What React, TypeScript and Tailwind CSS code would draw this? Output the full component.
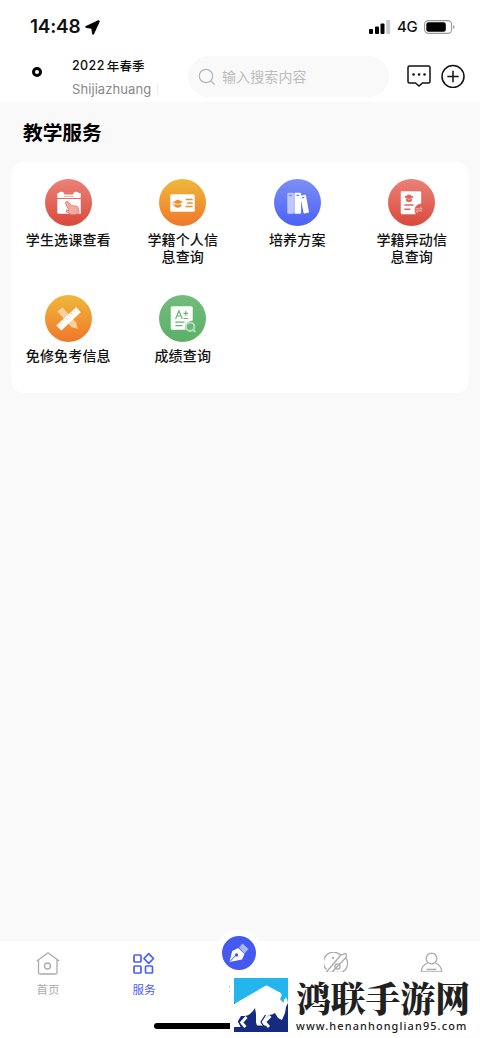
import type { ReactNode } from "react"

const services = [
    { title: ["学生选课查看"], color: "from-[#ea8178] to-[#d9483a]", icon: <CalendarIcon /> },
    { title: ["学籍个人信", "息查询"], color: "from-[#eeb83a] to-[#ee762b]", icon: <CardIcon /> },
    { title: ["培养方案"], color: "from-[#7d8ef5] to-[#4c60f5]", icon: <BooksIcon /> },
    { title: ["学籍异动信", "息查询"], color: "from-[#ea8178] to-[#d9483a]", icon: <RecordIcon /> },
    { title: ["免修免考信息"], color: "from-[#eeb83a] to-[#ee762b]", icon: <RulerIcon /> },
    { title: ["成绩查询"], color: "from-[#72bc7c] to-[#5bb066]", icon: <ScoreIcon /> },
]

function CalendarIcon() {
    return (
        <svg viewBox="0 0 46 46" className="size-full">
            <path d="M12 14h23v4.500H12zM12 19.500h23V34H13.500q-1.500 0-1.500-1.500z" fill="#fff" />
            <path d="M15 15h17" stroke="#e4786e" strokeWidth="4.500" />
            <path d="M16 16h15" stroke="#fff" strokeWidth="1.500" />
            <circle cx="16" cy="15.500" r="2.900" fill="#fff" />
            <circle cx="30.500" cy="15.500" r="2.900" fill="#fff" />
            <path d="M20.500 22.500q1.500-1.500 3 .5l2.500 3.300q1-.8 2 0 1-.6 2 .3 1.500-.5 2.300 1.200l1.200 5-4 2.200h-4l-5-3.500q-.5-1.800 3-.8l-3.200-6q-.5-1.300.2-2.200z" fill="#f1aaa2" stroke="#e06659" strokeWidth=".7" />
        </svg>
    )
}

function CardIcon() {
    return (
        <svg viewBox="0 0 46 46" className="size-full">
            <rect x="11" y="15" width="24" height="17" rx="1.500" fill="#fff" />
            <path d="M13.500 22.500l5-2.500 5 2.500-5 2.300z" fill="#ec9030" />
            <path d="M15.500 24.500v2.300q3 2 6 0v-2.300l-3 1.300zM14 23v4" fill="#ec9030" stroke="#ec9030" strokeWidth=".6" />
            <path d="M26 20h7M27.500 23.500h5.500M26 27h7" stroke="#ec9030" strokeWidth="1.400" />
        </svg>
    )
}

function BooksIcon() {
    return (
        <svg viewBox="0 0 46 46" className="size-full">
            <rect x="13" y="13.500" width="6.500" height="20.500" rx="1" fill="#bfc7fc" />
            <rect x="20" y="13.500" width="6.500" height="20.500" rx="1" fill="#fff" />
            <path d="M25.500 16.500l4.800-1q.8-.1 1 .7l3 16.500-4.400 1.100q-.8.200-1-.7z" fill="#fff" />
            <path d="M14.800 16h2.600M22 16h2.600M27.500 18.500l2-.5" stroke="#7082f5" strokeWidth="1.300" />
        </svg>
    )
}

function RecordIcon() {
    return (
        <svg viewBox="0 0 46 46" className="size-full">
            <path d="M13.500 12h17.500q1.500 0 1.500 1.500v10.500q-6 1-6.500 6 0 2.500 1.200 4.500H13.500Q12.500 34.500 12.500 33.500V13q0-1 1-1z" fill="#fff" />
            <path d="M16.500 17.500l4-2 4 2-4 2zM18 19.500v2q2.500 1.500 5 0v-2l-2.500 1.200z" fill="#df665b" stroke="#df665b" strokeWidth=".9" />
            <path d="M16 25.500h9M16 29.500h6" stroke="#df665b" strokeWidth="1.500" />
            <path d="M27 29.200h6.500l-2-1.700M33.500 31.200H27l2 1.700" fill="none" stroke="#f5bbb4" strokeWidth=".9" />
        </svg>
    )
}

function RulerIcon() {
    return (
        <svg viewBox="0 0 46 46" className="size-full">
            <path d="M12 16l5-4 13.500 15 1.500 6-6-1.500z" fill="#f8cf9e" />
            <path d="M11 29.800L30.500 12l4.500 4.800L16 34.800z" fill="#fff" />
            <path d="M13 29l1 1M15.500 26.800l1.500 1.700M18 24.500l1 1M20.500 22.200l1.500 1.700M23 19.900l1 1M25.500 17.600l1.500 1.700M28 15.300l1 1" stroke="#efa057" strokeWidth=".7" />
        </svg>
    )
}

function ScoreIcon() {
    return (
        <svg viewBox="0 0 46 46" className="size-full">
            <path d="M13 11h18.500q1.500 0 1.500 1.500v12.500q-7.500.5-7 9H13q-1.500 0-1.500-1.500v-20q0-1.500 1.500-1.500z" fill="#fff" />
            <path d="M16.200 23.500l3.300-8 3.300 8M17.500 20.500h4M24 18h4.500M26.200 15.700v4.600M24 23h4.500M16 26.500h9M16 30h7" fill="none" stroke="#65b56f" strokeWidth="1.100" />
            <circle cx="30.500" cy="31" r="4.100" fill="#69b873" stroke="#b8dfbd" strokeWidth="2" />
            <path d="M33 34l2.800 2.200" stroke="#b8dfbd" strokeWidth="2" />
        </svg>
    )
}

const StatusBar = () => (
    <div className="flex h-[54px] items-center justify-between pl-[30px] pr-[25px]">
        <div className="flex items-center gap-[5px] font-['Inter'] text-[19px] font-semibold tracking-[-0.25px]">
            <span>14:48</span>
            <svg viewBox="0 0 16 16" className="size-[15px]">
                <path d="M14.200.7L.9 7q-.8.500.2.900l6.100 1 .9 6q.4 1.100 1 .1L15.300 1.500q.1-1-1.100-.8z" stroke="#000" strokeWidth="1" strokeLinejoin="round" />
            </svg>
        </div>
        <div className="flex items-center">
            <svg viewBox="0 0 22 14" className="h-[14px] w-[22px]">
                <rect x="0" y="9" width="4" height="5" rx="1" />
                <rect x="6" y="6.500" width="4" height="7.500" rx="1" />
                <rect x="11.500" y="3.500" width="4" height="10.500" rx="1" />
                <rect x="17.200" y="0" width="4" height="14" rx="1" fill="#ccc" />
            </svg>
            <span className="ml-[6px] w-[22px] font-['Inter'] text-[15px] font-medium tracking-[-0.3px]">4G</span>
            <svg viewBox="0 0 31 14" className="ml-[5px] h-[14px] w-[31px]">
                <rect x=".6" y=".6" width="27" height="12.800" rx="3.800" fill="none" stroke="#999" strokeWidth="1.100" />
                <rect x="2.300" y="2.200" width="19.500" height="9.600" rx="2.300" />
                <path d="M29.200 5q1.400.5 1.400 2t-1.400 2z" fill="#999" />
            </svg>
        </div>
    </div>
)

const Header = () => (
    <div className="flex h-[48px] items-start">
        <div className="ml-[32px] mt-[13px] size-[10px] rounded-full border-[3px] border-black"></div>
        <div className="ml-[30px] w-[116px]">
            <div className="mt-[2px] flex gap-[2px] text-[12.500px] font-medium leading-[19px] tracking-[0.1px]">
                <span className="font-['Inter'] tracking-[0.4px]">2022</span>
                <span>年春季</span>
            </div>
            <div className="mt-[5px] flex items-center font-['Inter'] text-[13px] leading-[18px] tracking-[0.080px] text-[#888]">
                Shijiazhuang
                <span className="ml-[6px] h-[10px] w-px bg-[#eee]"></span>
            </div>
        </div>
        <div className="mt-[2px] flex h-[41px] w-[201px] items-center rounded-full bg-[#f9f9f9] pl-[10px]">
            <svg viewBox="0 0 18 18" className="size-[18px]" fill="none" stroke="#b5b5b5" strokeWidth="1.200">
                <circle cx="8" cy="8" r="6.700" />
                <path d="M12.800 12.800l3.700 3.700" />
            </svg>
            <span className="ml-[6px] text-[14px] tracking-[0.1px] text-[#bcbcbc]">输入搜索内容</span>
        </div>
        <svg viewBox="0 0 24 24" className="ml-[18px] mt-[10px] size-[24px]" fill="none" stroke="#111" strokeWidth="1.500">
            <path d="M2.500 2h19q1.500 0 1.500 1.500v14q0 1.500-1.500 1.500h-6L12 22l-3.500-3h-6Q1 19 1 17.500v-14Q1 2 2.500 2z" />
            <path d="M6.500 10.500h.1M12 10.500h.1M17.500 10.500h.1" strokeWidth="2.600" strokeLinecap="round" />
        </svg>
        <svg viewBox="0 0 24 24" className="ml-[10px] mt-[10px] size-[24px]" fill="none" stroke="#111" strokeWidth="1.500">
            <circle cx="12" cy="12.500" r="11" />
            <path d="M12 6.800v11.400M6.300 12.500h11.400" />
        </svg>
    </div>
)

const NavItem = ({ title, active, children }: { title?: string; active?: boolean; children?: ReactNode }) => (
    <div className={active ? "flex flex-col items-center text-[#4b5df2]" : "flex flex-col items-center text-[#ababab]"}>
        <svg viewBox="0 0 24 24" className="mt-[11px] size-[24px]" fill="none" stroke="currentColor" strokeWidth="1.300">
            {children}
        </svg>
        {title && <span className="mt-[5px] text-[11.5px] leading-[16px]">{title}</span>}
    </div>
)

const Watermark = () => (
    <div className="absolute bottom-0 left-[230px] flex h-[66px] w-[250px] bg-white">
        <svg viewBox="0 0 54 54" className="ml-[4px] mt-[6px] h-[54px] w-[54px] shrink-0">
            <rect width="54" height="27" fill="#23b5eb" />
            <rect y="25" width="54" height="29" fill="#152b80" />
            <path d="M0 26L7 22 31 8q1.500-.8 3 0l10 5.500q6 2 9 7.500l1 4-2 4-1 6-3 7-4-2-3-5q-3 2-6 2l-4 5 3.500 5.500H23l-1-3V36l-1-6q-4 7-10 8h-4l-3 5 3 6H0z" fill="#fff" />
            <path d="M47.500 10q-2.500 4 .5 7l-2 4 3.500 4 .5-3.500q3-1.500 1-5-3-2-3.500-6.500z" fill="#23b5eb" />
            <path d="M12.500 39l-5 5.500 4 4.500M36.500 38l-6 6 4.500 5" fill="none" stroke="#fff" strokeWidth="2.800" />
            <path d="M8 38.500L4.800 44l3.200 6M31.500 37l-4.500 7 4 6" fill="none" stroke="#152b80" strokeWidth="1.300" />
        </svg>
        <div className="ml-[8px] whitespace-nowrap text-[#202020]">
            <div className="mt-[7px] h-[37px] font-['Noto_Serif_CJK_SC','Noto_Sans_CJK_SC',serif] text-[34.800px] font-black leading-[37px]">鸿联手游网</div>
            <div className="mt-[3px] font-['Noto_Sans'] text-[10.900px] font-medium leading-[14px] tracking-[1.120px]">www.henanhonglian95.com</div>
        </div>
    </div>
)

const App = () => {
    return (
        <div className="relative flex h-[1038px] w-[480px] flex-col overflow-hidden bg-white font-['Noto_Sans_CJK_SC',sans-serif] text-[#111]">
            <StatusBar />
            <Header />
            <div className="h-[839px] bg-[#f9f9f9] px-[11px]">
                <h1 className="ml-[12px] h-[60px] pt-[15px] text-[19.700px] font-bold leading-[30px] text-black">教学服务</h1>
                <div className="grid h-[231px] grid-cols-4 content-start rounded-[13px] bg-white pt-[17px]">
                    {services.map((item) => (
                        <div key={item.title[0]} className="flex h-[116px] flex-col items-center">
                            <div className={`size-[47px] shrink-0 rounded-full bg-linear-to-b ${item.color}`}>{item.icon}</div>
                            <div className="mt-[5px] whitespace-nowrap text-center text-[14px] font-medium leading-[16.500px] tracking-[0.15px]">
                                {item.title.map((line) => (
                                    <div key={line}>{line}</div>
                                ))}
                            </div>
                        </div>
                    ))}
                </div>
            </div>
            <div className="relative grid h-[97px] grid-cols-5 bg-white">
                <NavItem title="首页">
                    <path d="M.8 9L12 .8 23.200 9M2.500 7.500V20.500q0 1.500 1.500 1.500h15.500Q21 22 21 20.500V7.500" />
                    <circle cx="11.500" cy="14" r="3" />
                </NavItem>
                <NavItem title="服务" active>
                    <g strokeWidth="1.700">
                        <rect x="2" y="3" width="7" height="7" rx="1" />
                        <rect x="2" y="14" width="7" height="7" rx="1" />
                        <rect x="13.500" y="14" width="7" height="7" rx="1" />
                        <path d="M16.700 1.700L21.500 6.500 16.700 11.300 11.900 6.500z" strokeLinejoin="round" />
                    </g>
                </NavItem>
                <div className="relative flex justify-center">
                    <div className="absolute -top-[11px] right-[25px] flex h-[46px] w-[48px] justify-center rounded-full bg-white pt-[6px]">
                        <svg viewBox="0 0 34 34" className="size-[34px]">
                            <circle cx="17" cy="17" r="17" fill="#4359ef" />
                            <path d="M17 11.500l3.500-4 6 5.500-4 4.500z" fill="#aab5fa" />
                            <path d="M7.500 26l2.700-11 6-3 6.300 6-2.500 5.500z" fill="#fff" />
                            <path d="M8 25.500l6-6.500" stroke="#4359ef" strokeWidth="1" />
                            <circle cx="14.500" cy="19" r="1.700" fill="#4359ef" />
                        </svg>
                    </div>
                    <span className="mt-[40px] h-[16px] text-[11.5px] leading-[16px] text-[#ababab]">学习</span>
                </div>
                <NavItem>
                    <path d="M2.500 17.500A9.800 9.800 0 0 1 16.500 3q3-.5 4.500-1.500 2 0 1 4.500A10 10 0 0 1 17.500 20.500M16.500 3.500L2 20.500M21.500 6L7.500 20.500M3 20.500h15" />
                    <circle cx="13.500" cy="14.500" r="2.600" />
                    <circle cx="9" cy="6" r=".5" fill="currentColor" />
                </NavItem>
                <NavItem>
                    <circle cx="11.500" cy="6.500" r="5.300" />
                    <path d="M7.500 11Q1.500 13.500 1.300 20h20.400q-.2-6.500-6.200-9M6.500 17.500h10" />
                </NavItem>
                <div className="absolute left-[154px] top-[82px] h-[6px] w-[172px] rounded-full bg-black"></div>
            </div>
            <Watermark />
        </div>
    )
}

export default App
